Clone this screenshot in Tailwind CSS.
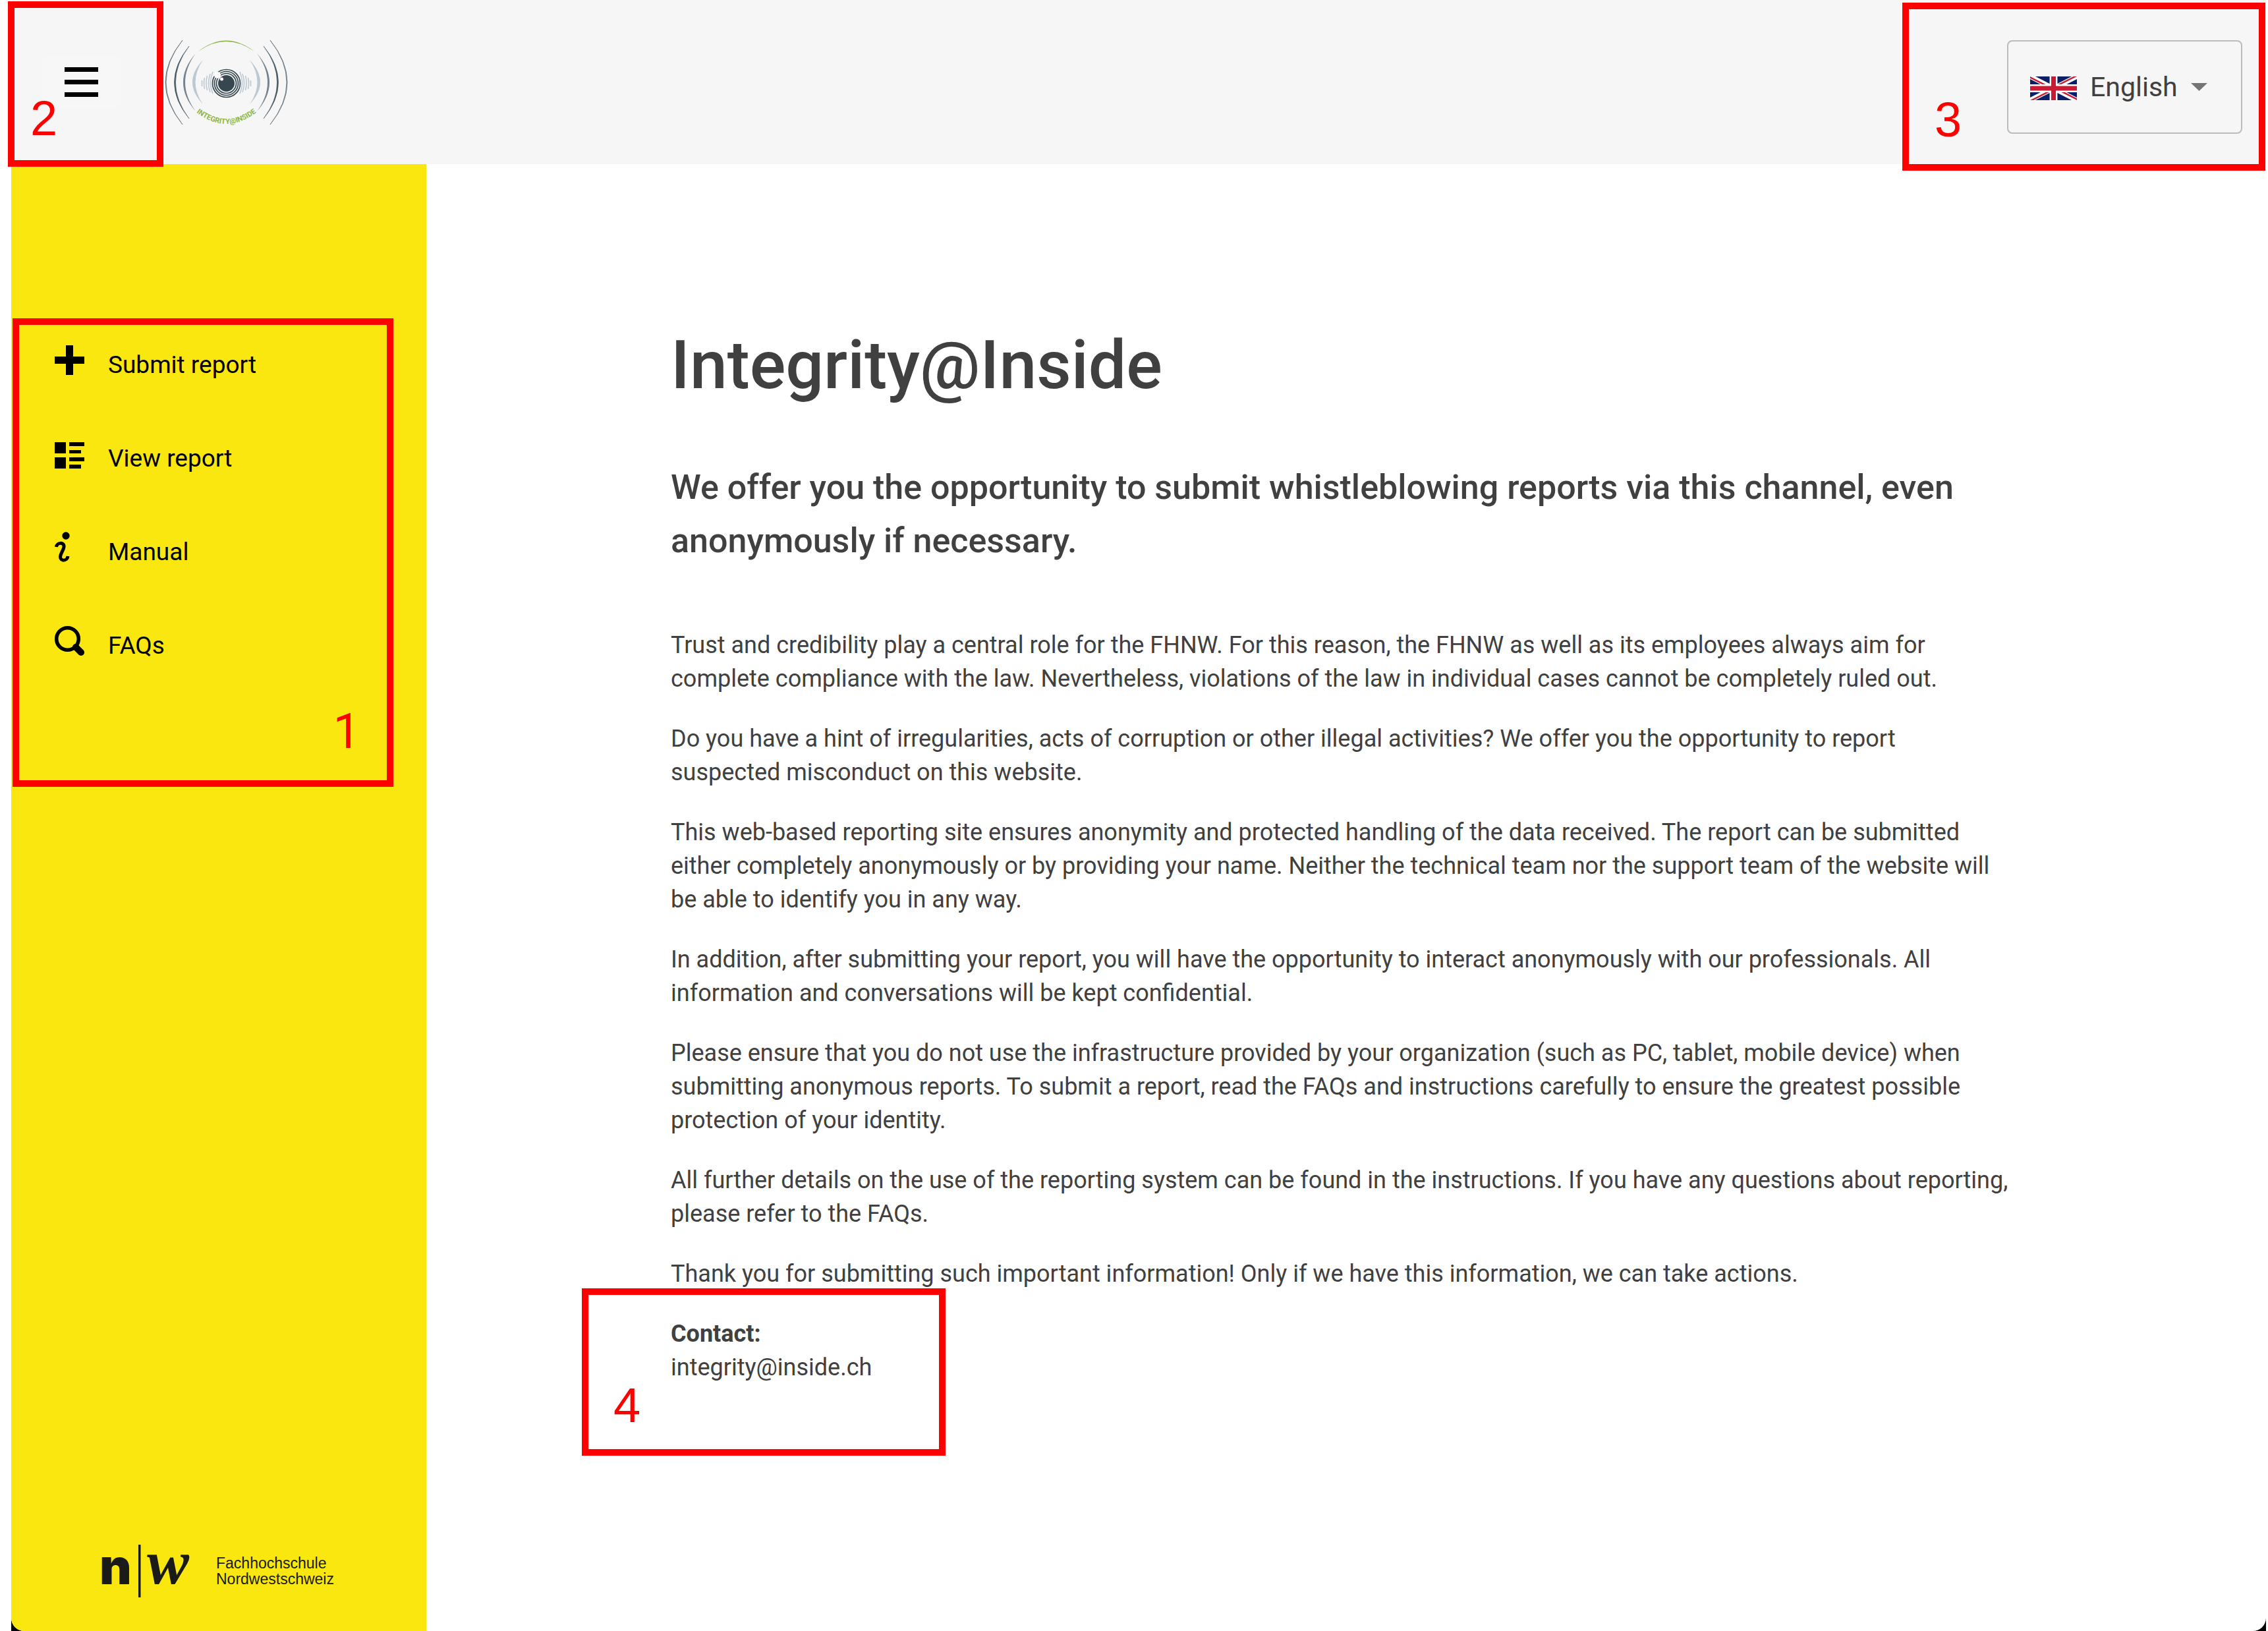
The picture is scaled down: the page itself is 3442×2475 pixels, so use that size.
<!DOCTYPE html>
<html lang="en">
<head>
<meta charset="utf-8">
<title>Integrity@Inside</title>
<script src="https://cdn.jsdelivr.net/npm/@tailwindcss/browser@4"></script>
</head>
<body class="bg-white font-['Roboto',sans-serif] text-[#404040]">
<div class="min-h-screen flex pl-[17px] pr-[3px]">
<div class="flex-1 flex bg-black">
<div class="flex-1 flex flex-col rounded-b-[20px] bg-white">

  <header class="relative h-[249px] shrink-0 flex items-center justify-between bg-[#f6f6f6] pr-9">
    <div class="flex items-center">
      <button type="button" aria-label="Toggle menu" class="ml-[46px] w-[120px] h-20 rounded-lg bg-[#f7f7f7] flex items-center justify-center">
        <svg class="w-[51px] h-[45px]" viewBox="0 0 51 45"><path d="M0 0h51v7H0zM0 19h51v7H0zM0 38h51v7H0z"/></svg>
      </button>
      <a href="#" aria-label="Integrity@Inside home" class="ml-16">
        <svg class="w-[192px] h-[136px] overflow-visible" viewBox="246 58 192 136" fill="none">
          <path d="M300 79Q342 46 385 79Q342 49 300 79Z" fill="#8cb544"/>
          <g id="waves">
            <path d="M276 62Q224 126 276 190Q226 126 276 62Z" fill="#6c7983" stroke="#6c7983" stroke-width=".8"/>
            <path d="M286 71Q241 126 286 181Q245 126 286 71Z" fill="#41525d" stroke="#41525d" stroke-width=".5"/>
            <path d="M296 82Q258 126 296 170Q264 126 296 82Z" fill="#74838f"/>
            <path d="M307 92Q275 126 307 159Q284 126 307 92Z" fill="#bdc9d2"/>
            <path d="M305.500 123v9M309.500 119q-2 8 0 17M313.500 116q-3 11 0 22M318 113q-5 14 0 28M322 110q-7 17 0 33" stroke="#bdc9d2" stroke-width="1.600"/>
          </g>
          <use href="#waves" transform="matrix(-1 0 0 1 685 0)"/>
          <g stroke="#36474f" stroke-width="1.700">
            <circle cx="342.500" cy="127.500" r="21"/><circle cx="342.500" cy="127.500" r="18"/><circle cx="342.500" cy="127.500" r="15"/>
          </g>
          <circle cx="342.500" cy="127.500" r="12.500" fill="#36474f"/>
          <circle cx="329" cy="115" r="5" fill="#fff"/><circle cx="335.500" cy="121" r="2.500" fill="#fff"/>
          <path id="brandArc" d="M288 164Q342.500 214 397 164"/>
          <text class="font-['Roboto',sans-serif] font-bold text-[11px]" fill="#8cb544"><textPath href="#brandArc" startOffset="50%" text-anchor="middle">INTEGRITY@INSIDE</textPath></text>
        </svg>
      </a>
    </div>

    <button type="button" aria-haspopup="listbox" class="relative mt-[15px] w-[357px] h-[142px] flex items-center rounded-lg border-2 border-[#bbbbbb] pl-[33px] text-[41px] leading-[48px]">
      <svg class="mt-1 w-[71px] h-9" viewBox="0 0 60 30" preserveAspectRatio="none">
        <clipPath id="flagHalves"><path d="M30 15h30v15zM30 15v15H0zM30 15H0V0zM30 15V0h30z"/></clipPath>
        <path d="M0 0h60v30H0z" fill="#0a1f68"/>
        <path d="M0 0l60 30M60 0L0 30" stroke="#fff" stroke-width="6"/>
        <path d="M0 0l60 30M60 0L0 30" stroke="#cb1a33" stroke-width="4" clip-path="url(#flagHalves)"/>
        <path d="M30 0v30M0 15h60" stroke="#fff" stroke-width="10"/>
        <path d="M30 0v30M0 15h60" stroke="#cb1a33" stroke-width="6"/>
      </svg>
      <span class="ml-5">English</span>
      <svg class="ml-5 w-[25px] h-3" viewBox="0 0 25 12"><path d="M0 0h25L12.500 12z" fill="#757575"/></svg>
    </button>

    <div class="pointer-events-none absolute -left-[5px] top-[2px] w-[236px] h-[251px] border-[10px] border-[#ff0000] pl-6 pt-[126px] font-['Liberation_Sans',sans-serif] text-[74px] leading-[84px] text-[#ff0000]">2</div>
    <div class="pointer-events-none absolute right-px top-1 w-[551px] h-[255px] border-[10px] border-[#ff0000] pl-[39px] pt-[126px] font-['Liberation_Sans',sans-serif] text-[74px] leading-[84px] text-[#ff0000]">3</div>
  </header>

  <div class="flex-1 flex">
    <aside class="w-[630px] shrink-0 flex flex-col justify-between rounded-bl-[20px] bg-[#fbe710] pt-[234px] pb-[50px] text-black">
      <nav class="relative ml-[2px] w-[578px] h-[711px] pl-16 pt-10 text-[37px] leading-[51px]">
        <a href="#" class="flex h-[142px] gap-9">
          <svg class="w-[45px] h-[47px]" viewBox="0 0 45 47"><path d="M17 1h11v17h17v11H28v17H17V29H0V18h17z"/></svg>
          <span class="pt-[5px]">Submit report</span>
        </a>
        <a href="#" class="flex h-[142px] gap-9">
          <svg class="w-[45px] h-[47px]" viewBox="0 0 45 47"><path d="M0 6h17v17H0zM0 29h17v17H0zM22 6h23v6H22zM22 18h18v5H22zM22 29h23v6H22zM22 40h18v6H22z"/></svg>
          <span class="pt-[5px]">View report</span>
        </a>
        <a href="#" class="flex h-[142px] gap-9">
          <svg class="w-[45px] h-[47px]" viewBox="0 0 45 47" fill="none"><circle cx="17" cy="6" r="5.700" fill="#000"/><path d="M2.500 23C3 16 15 15 14 23C13.500 28 9 32 8.500 38C8.500 45 19 45 20 37" stroke="#000" stroke-width="5"/></svg>
          <span class="pt-[5px]">Manual</span>
        </a>
        <a href="#" class="flex h-[142px] gap-9">
          <svg class="w-[45px] h-[47px]" viewBox="0 0 45 47" fill="none" stroke="#000"><circle cx="19.500" cy="20.500" r="16.800" stroke-width="5.600"/><path d="M32 33l8 8" stroke-width="10" stroke-linecap="round"/></svg>
          <span class="pt-[5px]">FAQs</span>
        </a>
        <div class="pointer-events-none absolute inset-0 flex items-end justify-end border-[10px] border-[#ff0000] pr-[40px] pb-[32px] text-[74px] leading-[84px] text-[#ff0000]">1</div>
      </nav>

      <a href="#" class="ml-[135px] flex items-center text-[#1a1a18]">
        <svg class="w-[142px] h-[82px] overflow-visible" viewBox="0 0 142 82" fill="#1a1a18">
          <text x="-1" y="61" class="font-['Inter',sans-serif] font-black text-[75px]">n</text>
          <path d="M58 1h3.500v80H58z"/>
          <text x="71" y="60" class="font-['Liberation_Serif',serif] font-bold italic text-[96px]">w</text>
        </svg>
        <span class="ml-[34px] font-['Liberation_Sans',sans-serif] text-[23px] leading-6">Fachhochschule<br>Nordwestschweiz</span>
      </a>
    </aside>

    <main class="flex-1 pt-[245px]">
      <div class="mx-auto max-w-[2050px]">
        <h1 class="text-[102px] leading-[120px] font-medium">Integrity@Inside</h1>
        <h2 class="mt-[85px] text-[52px] leading-[81px] font-medium">We offer you the opportunity to submit whistleblowing reports via this channel, even anonymously if necessary.</h2>
        <div class="mt-[93px] max-w-[2036px] flex flex-col gap-10 text-[36px] leading-[51px]">
          <p>Trust and credibility play a central role for the FHNW. For this reason, the FHNW as well as its employees always aim for complete compliance with the law. Nevertheless, violations of the law in individual cases cannot be completely ruled out.</p>
          <p>Do you have a hint of irregularities, acts of corruption or other illegal activities? We offer you the opportunity to report<br>suspected misconduct on this website.</p>
          <p>This web-based reporting site ensures anonymity and protected handling of the data received. The report can be submitted either completely anonymously or by providing your name. Neither the technical team nor the support team of the website will be able to identify you in any way.</p>
          <p>In addition, after submitting your report, you will have the opportunity to interact anonymously with our professionals. All information and conversations will be kept confidential.</p>
          <p>Please ensure that you do not use the infrastructure provided by your organization (such as PC, tablet, mobile device) when submitting anonymous reports. To submit a report, read the FAQs and instructions carefully to ensure the greatest possible protection of your identity.</p>
          <p>All further details on the use of the reporting system can be found in the instructions. If you have any questions about reporting, please refer to the FAQs.</p>
          <p>Thank you for submitting such important information! Only if we have this information, we can take actions.</p>
          <p class="relative"><strong class="font-bold">Contact:</strong><br><a href="mailto:integrity@inside.ch">integrity@inside.ch</a>
            <span class="pointer-events-none absolute -left-[135px] -top-[44px] w-[552px] h-[254px] border-[10px] border-[#ff0000] pl-[38px] pt-[126px] font-['Liberation_Sans',sans-serif] text-[74px] leading-[84px] text-[#ff0000]">4</span>
          </p>
        </div>
      </div>
    </main>
  </div>
</div>
</div>
</div>
</body>
</html>
